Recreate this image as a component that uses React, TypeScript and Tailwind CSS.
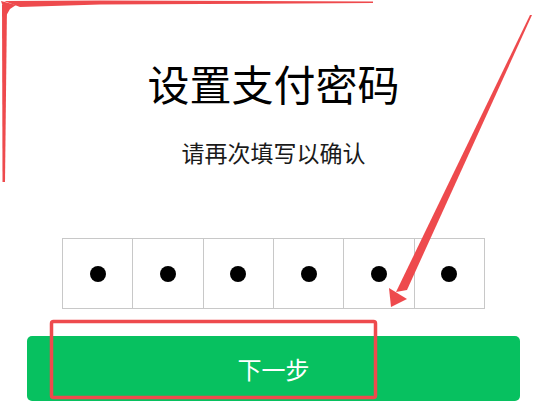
import React from "react";

export default function App() {
  const font = { fontFamily: '"Noto Sans CJK SC", "Noto Sans", sans-serif' };
  return (
    <div className="relative w-[552px] h-[402px] overflow-hidden bg-white" style={font}>
      <div className="w-[547px] flex flex-col items-center pt-[62px]">
        <h1 className="text-[42px] leading-none text-black font-normal">设置支付密码</h1>
        <p className="mt-[37px] text-[23px] leading-none text-[#1a1a1a]">请再次填写以确认</p>
        <div className="mt-[74px] flex w-[423px] h-[71px] border border-[#c8c8c8]">
          {[0, 1, 2, 3, 4, 5].map((i) => (
            <div
              key={i}
              className={
                "flex-1 flex items-center justify-center " +
                (i < 5 ? "border-r border-[#c8c8c8]" : "")
              }
            >
              <div className="w-4 h-4 rounded-full bg-black" />
            </div>
          ))}
        </div>
        <button className="mt-[27px] w-[493px] h-[65px] rounded-[5px] bg-[#07c160] text-white text-[24px] leading-none flex items-center justify-center">
          下一步
        </button>
      </div>
      <svg
        className="absolute left-0 top-0 pointer-events-none"
        width="552"
        height="402"
        viewBox="0 0 552 402"
      >
        <g fill="#ee4a4d">
          <polygon points="4,1 100,0.5 373,1.5 373,3 100,4.5 20,7" />
          <polygon points="1,1 16,5 10,9 6,16" />
          <polygon points="2,5 7,5 5,182 2.5,182" />
          <polygon points="530,15 532,15 407,290 396,292" />
          <polygon points="389,288 407,299 391,307" />
        </g>
        <rect
          x="51.5"
          y="321.5"
          width="324"
          height="76"
          rx="2"
          fill="none"
          stroke="#ee4a4d"
          strokeWidth="3.5"
        />
      </svg>
    </div>
  );
}
